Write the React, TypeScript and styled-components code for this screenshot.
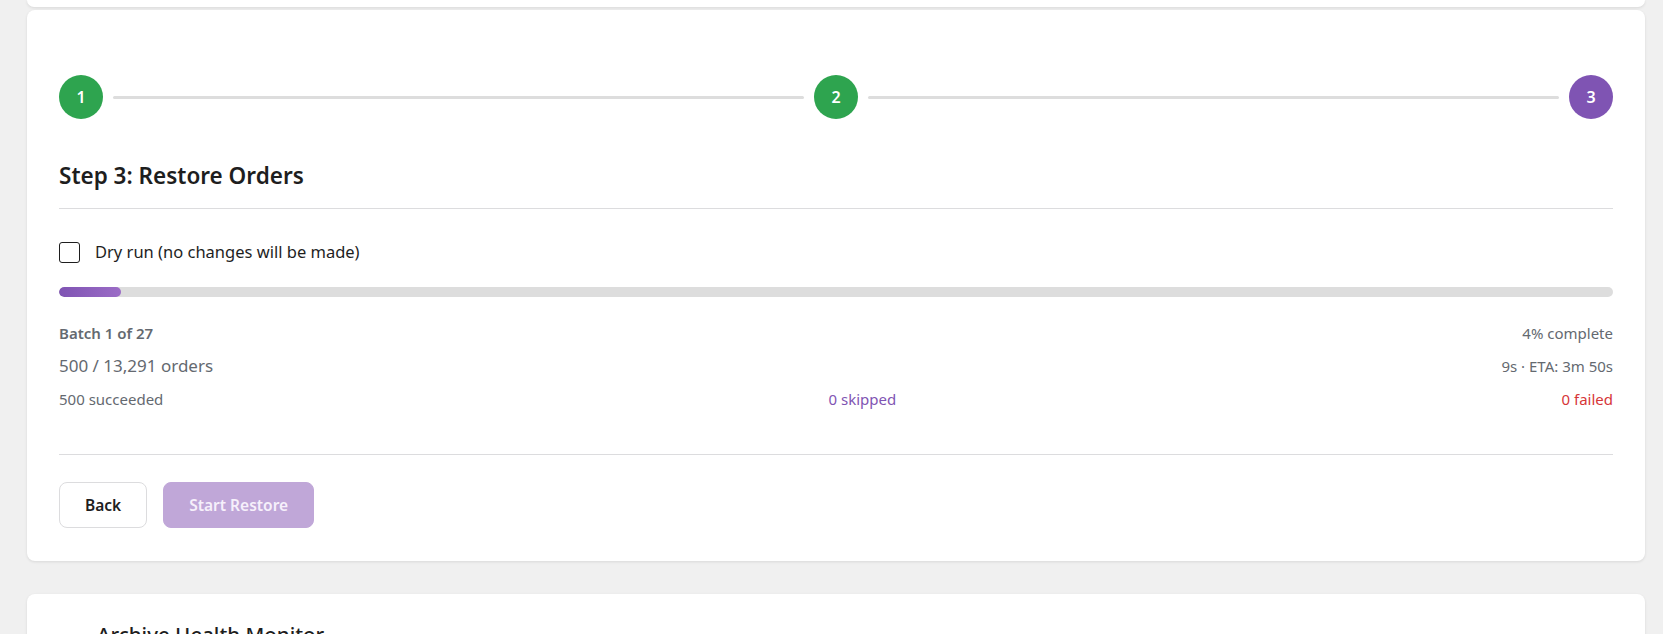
import * as React from "react";
import styled, { createGlobalStyle } from "styled-components";

const GlobalStyle = createGlobalStyle`
  html, body {
    margin: 0;
    padding: 0;
    overflow: hidden;
    background: #f0f0f0;
    font-family: "Noto Sans", "Open Sans", sans-serif;
    color: #1e1e1e;
  }
`;

const Page = styled.div`
  display: flex;
  flex-direction: column;
  padding: 0 18px 0 27px;
  height: 634px;
  overflow: hidden;

  & > * {
    flex-shrink: 0;
  }
`;

const Card = styled.div`
  background: #fff;
  border-radius: 8px;
  box-shadow: 0 1px 3px rgba(0, 0, 0, 0.1);
  padding: 32px;
`;

const PeekCard = styled.div`
  height: 7px;
  background: #fff;
  border-radius: 0 0 8px 8px;
  box-shadow: 0 1px 3px rgba(0, 0, 0, 0.1);
  margin-bottom: 3px;
`;

const RestoreCard = styled(Card)`
  padding-top: 65px;
  padding-bottom: 33px;
  margin-bottom: 33px;
`;

const Stepper = styled.div`
  display: flex;
  align-items: center;
  margin-bottom: 42px;
`;

const StepCircle = styled.div<{ $state: "done" | "active" }>`
  width: 44px;
  height: 44px;
  border-radius: 50%;
  flex-shrink: 0;
  display: flex;
  align-items: center;
  justify-content: center;
  color: #fff;
  font-weight: 600;
  font-size: 16px;
  background: ${p => (p.$state === "done" ? "#2ea44f" : "#7f54b3")};
`;

const StepLine = styled.div`
  flex: 1;
  height: 3px;
  margin: 0 10px;
  background: #dddddd;
  border-radius: 2px;
`;

const Title = styled.h2`
  margin: 0;
  font-size: 22.5px;
  font-weight: 600;
  line-height: 30px;
  color: #1e1e1e;
  padding-bottom: 17px;
  border-bottom: 1px solid #dcdcde;
`;

const CheckRow = styled.label`
  display: flex;
  align-items: center;
  gap: 15px;
  margin-top: 32px;
  font-size: 16.5px;
  line-height: 22px;
  color: #1e1e1e;
`;

const CheckBox = styled.span`
  width: 21px;
  height: 21px;
  box-sizing: border-box;
  border: 1.5px solid #1e1e1e;
  border-radius: 3px;
  background: #fff;
`;

const ProgressTrack = styled.div`
  margin-top: 24px;
  height: 10px;
  border-radius: 5px;
  background: #dddddd;
  overflow: hidden;
`;

const ProgressFill = styled.div`
  height: 100%;
  border-radius: 5px;
  background: linear-gradient(90deg, #7f54b3, #9b6cc6);
`;

const Stats = styled.div`
  display: flex;
  flex-direction: column;
  gap: 9px;
  margin-top: 24px;
  padding-bottom: 43px;
  border-bottom: 1px solid #dcdcde;
`;

const StatRow = styled.div`
  display: flex;
  justify-content: space-between;
  align-items: center;
  line-height: 24px;
`;

const Stat = styled.span<{ $tone?: "bold" | "big" | "skip" | "fail" }>`
  font-weight: ${p => (p.$tone === "bold" ? 600 : 400)};
  font-size: ${p => (p.$tone === "big" ? "17px" : "15px")};
  color: ${p =>
    p.$tone === "skip" ? "#7f54b3" : p.$tone === "fail" ? "#d63638" : "#646970"};
`;

const Actions = styled.div`
  display: flex;
  gap: 16px;
  margin-top: 27px;
`;

const Button = styled.button<{ $primary?: boolean }>`
  height: 46px;
  padding: 0 25px;
  border-radius: 8px;
  font-family: inherit;
  font-size: 15.5px;
  font-weight: 600;
  border: 1px solid ${p => (p.$primary ? "#c0a7d8" : "#dcdcde")};
  background: ${p => (p.$primary ? "#c0a7d8" : "#fff")};
  color: ${p => (p.$primary ? "#f6f0fb" : "#1e1e1e")};
  cursor: ${p => (p.$primary ? "default" : "pointer")};
`;

const MonitorCard = styled(Card)`
  padding: 25px 32px 32px 70px;
`;

const MonitorTitle = styled.h2`
  margin: 0;
  font-size: 20.5px;
  line-height: 30px;
  font-weight: 500;
  color: #1e1e1e;
`;

export default function App() {
  const done = 500;
  const total = 13291;
  const percent = Math.round((done / total) * 100);

  return (
    <>
      <GlobalStyle />
      <Page>
        <PeekCard />
        <RestoreCard>
          <Stepper>
            <StepCircle $state="done">1</StepCircle>
            <StepLine />
            <StepCircle $state="done">2</StepCircle>
            <StepLine />
            <StepCircle $state="active">3</StepCircle>
          </Stepper>
          <Title>Step 3: Restore Orders</Title>
          <CheckRow>
            <CheckBox />
            Dry run (no changes will be made)
          </CheckRow>
          <ProgressTrack>
            <ProgressFill style={{ width: `${percent}%` }} />
          </ProgressTrack>
          <Stats>
            <StatRow>
              <Stat $tone="bold">Batch 1 of 27</Stat>
              <Stat>{percent}% complete</Stat>
            </StatRow>
            <StatRow>
              <Stat $tone="big">500 / 13,291 orders</Stat>
              <Stat>9s · ETA: 3m 50s</Stat>
            </StatRow>
            <StatRow>
              <Stat>500 succeeded</Stat>
              <Stat $tone="skip">0 skipped</Stat>
              <Stat $tone="fail">0 failed</Stat>
            </StatRow>
          </Stats>
          <Actions>
            <Button>Back</Button>
            <Button $primary disabled>
              Start Restore
            </Button>
          </Actions>
        </RestoreCard>
        <MonitorCard>
          <MonitorTitle>Archive Health Monitor</MonitorTitle>
        </MonitorCard>
      </Page>
    </>
  );
}
